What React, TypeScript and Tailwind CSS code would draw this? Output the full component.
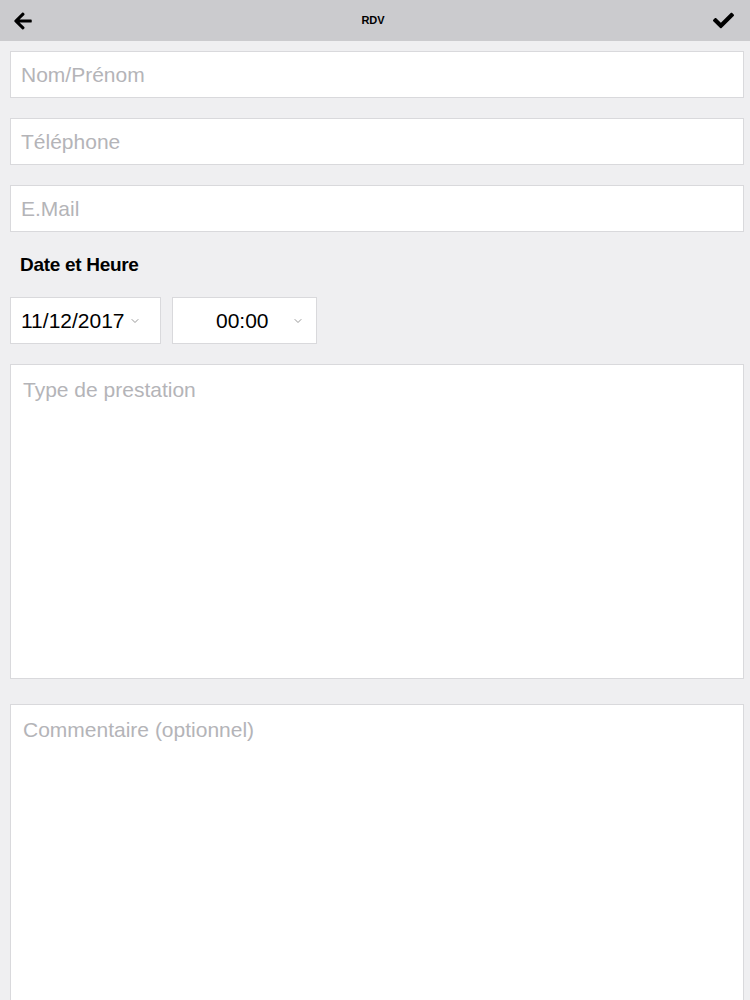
import { FaArrowLeft, FaCheck } from 'react-icons/fa';
import { ChevronDown } from 'lucide-react';

function Field({ placeholder }: { placeholder: string }) {
  return (
    <div className="h-[47px] bg-white border border-[#d9d9dc] flex items-center px-[10px]">
      <span className="text-[21px] text-[#b4b4b8]">{placeholder}</span>
    </div>
  );
}

export default function App() {
  return (
    <div className="w-[750px] h-[1000px] overflow-hidden bg-[#efeff1]" style={{ fontFamily: '"Liberation Sans", Arial, sans-serif' }}>
      <header className="h-[41px] bg-[#cbcbce] flex items-center justify-between pl-[13px] pr-[16px]">
        <FaArrowLeft className="w-[20px] h-[20px] text-black" />
        <span className="text-[11px] font-bold text-black">RDV</span>
        <FaCheck className="w-[21px] h-[21px] text-black" />
      </header>

      <div className="pl-[10px] pr-[6px] pt-[10px] flex flex-col">
        <Field placeholder="Nom/Prénom" />
        <div className="h-[20px]" />
        <Field placeholder="Téléphone" />
        <div className="h-[20px]" />
        <Field placeholder="E.Mail" />

        <div className="pt-[20px] pb-[19px] pl-[10px] text-[19px] tracking-[-0.3px] font-bold text-black leading-[26px]">Date et Heure</div>

        <div className="flex gap-[11px]">
          <div className="w-[151px] h-[47px] bg-white border border-[#d9d9dc] flex items-center pl-[10px]">
            <span className="text-[21px] text-black">11/12/2017</span>
            <ChevronDown className="w-[12px] h-[12px] text-[#999] ml-[4px]" strokeWidth={2} />
          </div>
          <div className="w-[145px] h-[47px] bg-white border border-[#d9d9dc] flex items-center pl-[43px] pr-[12px] justify-between">
            <span className="text-[21px] text-black">00:00</span>
            <ChevronDown className="w-[12px] h-[12px] text-[#999]" strokeWidth={2} />
          </div>
        </div>

        <div className="mt-[20px] h-[315px] bg-white border border-[#d9d9dc] px-[12px] pt-[9px]">
          <span className="text-[21px] text-[#b4b4b8]">Type de prestation</span>
        </div>

        <div className="mt-[25px] h-[320px] bg-white border border-[#d9d9dc] px-[12px] pt-[9px]">
          <span className="text-[21px] text-[#b4b4b8]">Commentaire (optionnel)</span>
        </div>
      </div>
    </div>
  );
}
